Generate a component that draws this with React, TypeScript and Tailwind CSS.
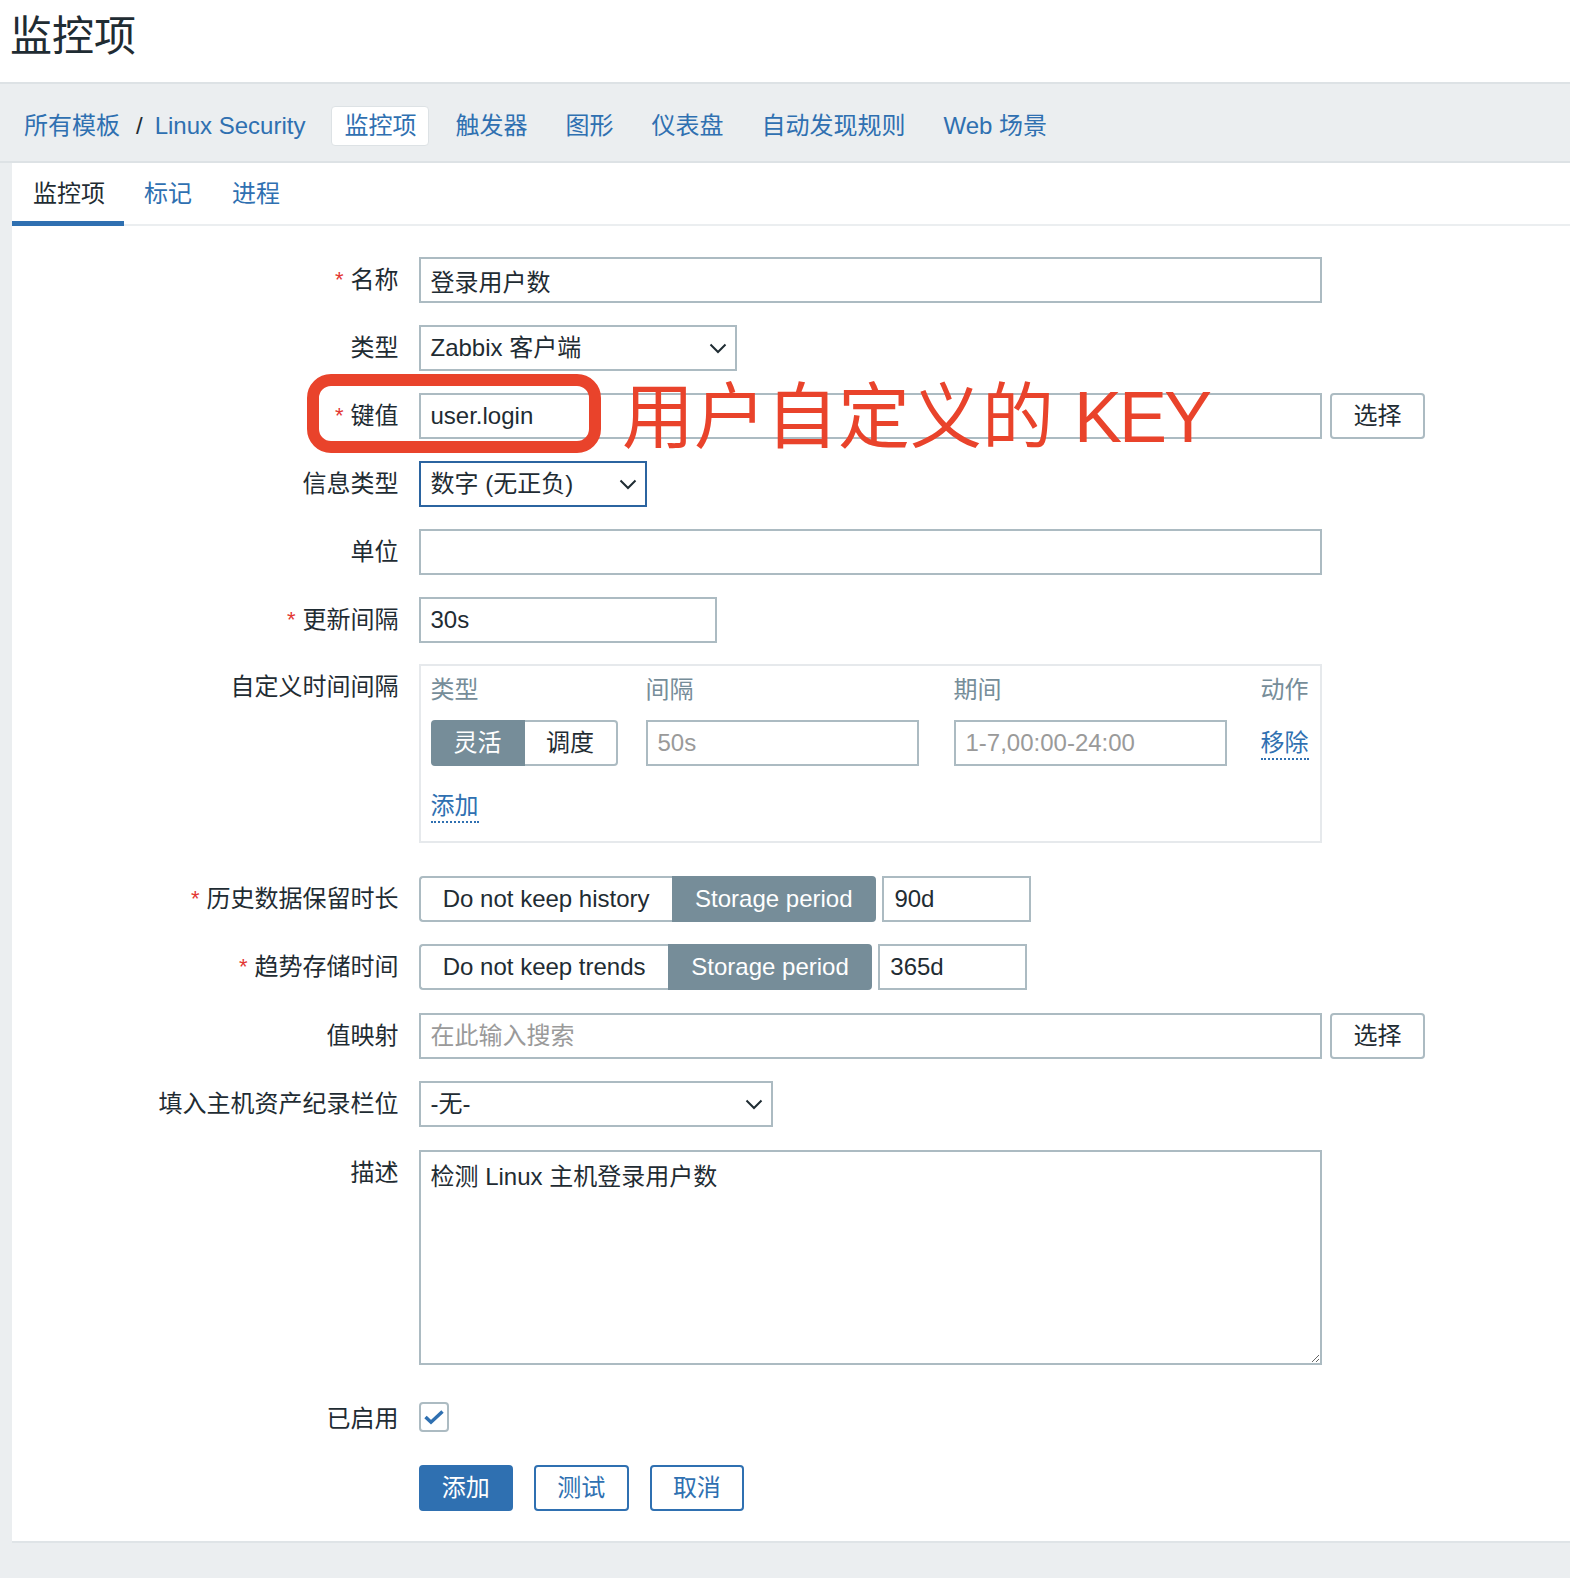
import type { ReactNode } from "react";
import clsx from "clsx";

const navItems = ["触发器", "图形", "仪表盘", "自动发现规则", "Web 场景"];

function Chevron() {
  return (
    <svg width="18" height="11" viewBox="0 0 18 11" fill="none" aria-hidden="true">
      <path d="M1.5 1.5 9 9l7.5-7.5" stroke="#1f2c33" strokeWidth="2" />
    </svg>
  );
}

function Label({ children, required }: { children: ReactNode; required?: boolean }) {
  return (
    <div className="flex h-[46px] w-[386.5px] shrink-0 items-center justify-end gap-[7px] leading-[30px]">
      {required ? <span className="text-[22px] text-[#e33734]">*</span> : null}
      <span>{children}</span>
    </div>
  );
}

function Row({
  label,
  required,
  className,
  children,
}: {
  label: string;
  required?: boolean;
  className?: string;
  children: ReactNode;
}) {
  return (
    <div className={clsx("flex gap-[20px]", className)}>
      <Label required={required}>{label}</Label>
      <div className="flex items-start gap-[8px]">{children}</div>
    </div>
  );
}

function Campo({
  largura,
  valor,
  placeholder,
  azul,
}: {
  largura: string;
  valor?: string;
  placeholder?: string;
  azul?: boolean;
}) {
  return (
    <input
      readOnly
      value={valor ?? ""}
      placeholder={placeholder}
      className={clsx(
        "h-[46px] border-2 bg-white px-[10px] text-[24px] text-[#1f2c33] outline-none placeholder:text-[#9a9a9a]",
        azul ? "border-[#2b64a0]" : "border-[#acbbc2]",
        largura,
      )}
    />
  );
}

function Selecao({ largura, valor, azul }: { largura: string; valor: string; azul?: boolean }) {
  return (
    <div
      className={clsx(
        "flex h-[46px] items-center justify-between border-2 bg-white pl-[10px] pr-[8px] leading-[30px]",
        azul ? "border-[#2b64a0]" : "border-[#acbbc2]",
        largura,
      )}
    >
      <span>{valor}</span>
      <Chevron />
    </div>
  );
}

function BotaoSelecionar() {
  return (
    <button className="flex h-[46px] w-[94.5px] items-center justify-center rounded-[4px] border-2 border-[#acbbc2] bg-white leading-[30px] text-[#1f2c33]">
      选择
    </button>
  );
}

function Segmentado({
  opcoes,
  larguras,
  ativo,
}: {
  opcoes: string[];
  larguras: string[];
  ativo: number;
}) {
  return (
    <div className="flex h-[46px]">
      {opcoes.map((op, i) => (
        <div
          key={op}
          className={clsx(
            "flex items-center justify-center border-2 leading-[30px]",
            larguras[i],
            i === 0 ? "rounded-l-[4px]" : "rounded-r-[4px]",
            i === ativo
              ? "border-[#768d99] bg-[#768d99] text-white"
              : "border-[#acbbc2] bg-white text-[#1f2c33]",
            i === 0 && i !== ativo ? "border-r-0" : "",
            i === 1 && i !== ativo ? "border-l-0" : "",
          )}
        >
          {op}
        </div>
      ))}
    </div>
  );
}

function LinkPontilhado({ children }: { children: ReactNode }) {
  return (
    <span className="inline-block border-b-2 border-dotted border-[#2f70b1] pb-[3px] leading-[24px] text-[#2f70b1]">
      {children}
    </span>
  );
}

export default function App() {
  return (
    <div className="relative min-h-[1578px] bg-[#ebeef0] font-['Liberation_Sans','Noto_Sans_CJK_SC',sans-serif] text-[24px] text-[#1f2c33]">
      <header className="flex h-[82px] items-center bg-white pb-[9px] pl-[10px]">
        <h1 className="text-[42px] leading-[50px]">监控项</h1>
      </header>

      <nav className="flex h-[81px] items-center border-y-2 border-[#dde2e5] bg-[#ebeef0] pl-[24px] pt-[6px] leading-[30px] text-[#2f70b1]">
        <span>所有模板</span>
        <span className="ml-[16px] text-[#1f2c33]">/</span>
        <span className="ml-[12px]">Linux Security</span>
        <div className="ml-[26px] flex items-center gap-[14px]">
          <span className="flex h-[40px] items-center rounded-[4px] border border-[#dde2e5] bg-white px-[12px]">
            监控项
          </span>
          {navItems.map((item) => (
            <span key={item} className="px-[12px]">
              {item}
            </span>
          ))}
        </div>
      </nav>

      <main className="ml-[12px] border-b-2 border-[#dfe4e7] bg-white pb-[30px]">
        <div className="flex h-[63px] border-b-2 border-[#ebeef0] leading-[30px]">
          <div className="relative flex items-center pl-[21px] pr-[19px]">
            监控项
            <span className="absolute bottom-[-2px] left-0 right-0 h-[5px] bg-[#2f70b1]" />
          </div>
          <div className="flex items-center px-[20px] text-[#2f70b1]">标记</div>
          <div className="flex items-center px-[20px] text-[#2f70b1]">进程</div>
        </div>

        <div className="flex flex-col pt-[31px]">
          <Row label="名称" required>
            <Campo largura="w-[903.7px]" valor="登录用户数" />
          </Row>
          <Row label="类型" className="mt-[22px]">
            <Selecao largura="w-[318px]" valor="Zabbix 客户端" />
          </Row>
          <Row label="键值" required className="mt-[22px]">
            <Campo largura="w-[903.7px]" valor="user.login" />
            <BotaoSelecionar />
          </Row>
          <Row label="信息类型" className="mt-[22px]">
            <Selecao largura="w-[228.3px]" valor="数字 (无正负)" azul />
          </Row>
          <Row label="单位" className="mt-[22px]">
            <Campo largura="w-[903.7px]" />
          </Row>
          <Row label="更新间隔" required className="mt-[22px]">
            <Campo largura="w-[298px]" valor="30s" />
          </Row>

          <Row label="自定义时间间隔" className="mt-[21.4px]">
            <div className="h-[179px] w-[903.7px] border-2 border-[#e6e9ec] px-[10px] pt-[12px]">
              <div className="grid grid-cols-[215px_308px_307px_1fr] leading-[24px] text-[#768d99]">
                <span>类型</span>
                <span>间隔</span>
                <span>期间</span>
                <span>动作</span>
              </div>
              <div className="mt-[17.6px] grid grid-cols-[215px_308px_307px_1fr] items-center">
                <Segmentado opcoes={["灵活", "调度"]} larguras={["w-[94px]", "w-[93px]"]} ativo={0} />
                <Campo largura="w-[273px]" placeholder="50s" />
                <Campo largura="w-[273px]" placeholder="1-7,00:00-24:00" />
                <div>
                  <LinkPontilhado>移除</LinkPontilhado>
                </div>
              </div>
              <div className="mt-[22px]">
                <LinkPontilhado>添加</LinkPontilhado>
              </div>
            </div>
          </Row>

          <Row label="历史数据保留时长" required className="mt-[32.6px]">
            <div className="flex gap-[6.6px]">
              <Segmentado
                opcoes={["Do not keep history", "Storage period"]}
                larguras={["w-[253.3px]", "w-[204px]"]}
                ativo={1}
              />
              <Campo largura="w-[148.4px]" valor="90d" />
            </div>
          </Row>
          <Row label="趋势存储时间" required className="mt-[22.4px]">
            <div className="flex gap-[6px]">
              <Segmentado
                opcoes={["Do not keep trends", "Storage period"]}
                larguras={["w-[249.3px]", "w-[204.5px]"]}
                ativo={1}
              />
              <Campo largura="w-[148.4px]" valor="365d" />
            </div>
          </Row>
          <Row label="值映射" className="mt-[22.4px]">
            <Campo largura="w-[903.7px]" placeholder="在此输入搜索" />
            <BotaoSelecionar />
          </Row>
          <Row label="填入主机资产纪录栏位" className="mt-[22.4px]">
            <Selecao largura="w-[354.3px]" valor="-无-" />
          </Row>
          <Row label="描述" className="mt-[22.4px]">
            <textarea
              readOnly
              value="检测 Linux 主机登录用户数"
              className="h-[215px] w-[903.7px] border-2 border-[#acbbc2] px-[10px] pt-[10px] leading-[30px] text-[#1f2c33] outline-none"
            />
          </Row>

          <div className="mt-[37px] flex items-center gap-[20px]">
            <div className="flex h-[30px] w-[386.5px] shrink-0 items-center justify-end pt-[4px] leading-[30px]">
              已启用
            </div>
            <div className="flex h-[30px] w-[30px] items-center justify-center rounded-[4px] border-2 border-[#acbbc2] bg-white">
              <svg width="22" height="16" viewBox="0 0 22 16" fill="none" aria-hidden="true">
                <path d="M2.5 8 8 13.2 19.5 2.5" stroke="#2f70b1" strokeWidth="3.5" />
              </svg>
            </div>
          </div>

          <div className="mt-[33px] flex gap-[21px] pl-[406.7px] leading-[30px]">
            <button className="flex h-[46.6px] w-[94.3px] items-center justify-center rounded-[4px] border-2 border-[#2f70b1] bg-[#2f70b1] text-white">
              添加
            </button>
            <button className="flex h-[46.6px] w-[94.6px] items-center justify-center rounded-[4px] border-2 border-[#2f70b1] bg-white text-[#2f70b1]">
              测试
            </button>
            <button className="flex h-[46.6px] w-[94.6px] items-center justify-center rounded-[4px] border-2 border-[#2f70b1] bg-white text-[#2f70b1]">
              取消
            </button>
          </div>
        </div>
      </main>

      {/* anotação vermelha sobre o campo de chave */}
      <div className="pointer-events-none absolute left-[307px] top-[374px] h-[79px] w-[294px] rounded-[24px] border-[12px] border-[#e9432b]" />
      <div className="pointer-events-none absolute left-[622px] top-[381px] whitespace-nowrap text-[72px] leading-[72px] text-[#e9432b]">
        用户自定义的 <span className="tracking-[-3px]">KEY</span>
      </div>
    </div>
  );
}
